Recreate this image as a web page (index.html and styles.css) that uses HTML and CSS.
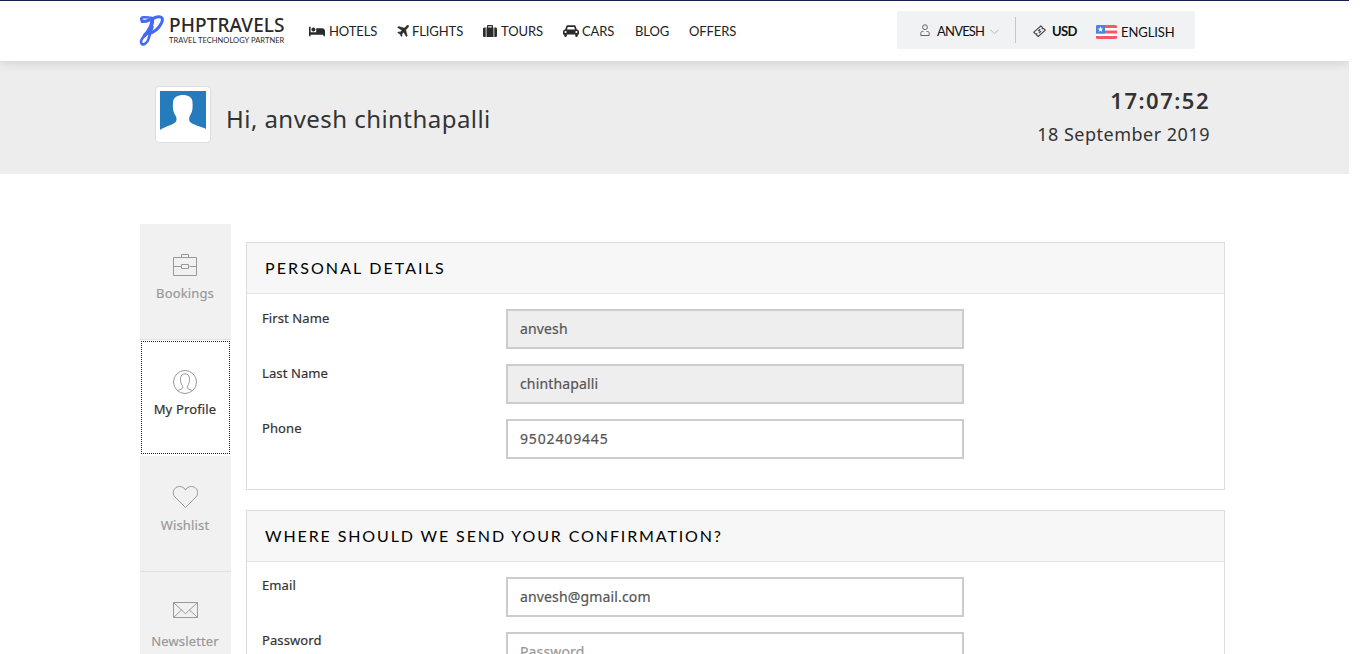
FILE: index.html
```html
<!DOCTYPE html>
<html lang="en">
<head>
<meta charset="utf-8">
<title>My Account</title>
<link rel="stylesheet" href="styles.css">
</head>
<body>
<div class="page">
  <header class="header">
    <a class="logo">
      <svg class="logo-mark" width="26" height="32" viewBox="0 0 26 32" fill="none" stroke="#4569f5" stroke-linecap="round" stroke-linejoin="round">
        <path stroke-width="2.600" d="M8 6C5.500 6.500 2.200 6 2.200 4C2.200 2 6 2 10 2.500C12 2.500 14 2.500 14 4C14 10 11 15 7 19.500C3 23 1 26 2.500 28.500C4 31 8.500 28 9.500 24C11 19 11.500 16 13.500 12"/>
        <path stroke-width="3.800" d="M13.200 5C13 12 9.500 16.500 5.500 20.500"/>
        <path stroke-width="3" d="M3 6.500C9 7 13 3 18 2C23 1 24.500 3.500 22.500 8C20 13 15.500 17.500 9 18.700"/>
      </svg>
      <span class="logo-words"><b class="logo-name">PHPTRAVELS</b><small class="logo-tag">TRAVEL TECHNOLOGY PARTNER</small></span>
    </a>
    <nav class="nav">
      <a class="nav-item hotels"><svg width="16" height="13" viewBox="0 0 640 512"><path fill="#292b2c" d="M176 256c44 0 80-36 80-80s-36-80-80-80-80 36-80 80 36 80 80 80zm352-128H304c-9 0-16 7-16 16v144H64V80c0-9-7-16-16-16H16C7 64 0 71 0 80v352c0 9 7 16 16 16h32c9 0 16-7 16-16v-48h512v48c0 9 7 16 16 16h32c9 0 16-7 16-16V240c0-62-50-112-112-112z"/></svg><span>HOTELS</span></a>
      <a class="nav-item flights"><svg width="12" height="12" viewBox="0 0 12 12"><path fill="#292b2c" stroke="#292b2c" stroke-width=".6" d="M10.700.3c.8 0 1 .4.800 1.200-.2.700-.8 1.300-1.300 1.800L8.700 4.900l1.500 5.900-.9.800-2.500-4.500-2 1.900.3 1.700-.8.700-1.200-2.300L.8 7.700l.7-.8 1.700.3 2-2L.7 2.500l.9-.9 5.700 1.600L8.800 1.700c.6-.6 1.200-1.200 1.900-1.400z"/></svg><span>FLIGHTS</span></a>
      <a class="nav-item tours"><svg width="14" height="13" viewBox="0 0 14 13"><path fill="#292b2c" d="M4 2.500V1.200C4 .5 4.500 0 5.200 0h3.600C9.500 0 10 .5 10 1.200v1.300h.5V12h-7V2.500zM5.200 2.500h3.600V1.200H5.200zM0 4c0-1 .7-1.500 1.500-1.500h1.200V12H1.500C.5 12 0 11.500 0 10.500zM11.300 2.500h1.200c.9 0 1.500.5 1.500 1.500v6.500c0 1-.6 1.500-1.500 1.500h-1.200z" fill-rule="evenodd"/></svg><span>TOURS</span></a>
      <a class="nav-item cars"><svg width="16" height="12" viewBox="0 0 16 12"><path fill="#292b2c" fill-rule="evenodd" d="M2.200 4.500 3.200 1.500C3.500.5 4 .2 5 .2h6c1 0 1.500.3 1.800 1.300l1 3c1.400.2 2.200 1 2.200 2.300v2.700h-1.200v1c0 .9-.5 1.500-1.300 1.500s-1.300-.6-1.300-1.500v-1H3.800v1c0 .9-.5 1.500-1.300 1.500s-1.300-.6-1.300-1.500v-1H0V6.800c0-1.300.8-2.100 2.200-2.300zM4 4.500h8l-.8-2.400H4.800zM2.600 8.100a1.100 1.100 0 1 0 0-2.200 1.100 1.100 0 0 0 0 2.200zm10.800 0a1.100 1.100 0 1 0 0-2.200 1.100 1.100 0 0 0 0 2.200z"/></svg><span>CARS</span></a>
      <a class="nav-item blog">BLOG</a>
      <a class="nav-item offers">OFFERS</a>
    </nav>
    <div class="tools">
      <a class="tool account"><svg width="10" height="13" viewBox="0 0 10 13" fill="none" stroke="#646669"><circle cx="5" cy="3.200" r="2.400"/><path d="M3.500 7.500H2.300C1.200 7.500.8 8.300.8 9.300v2.200h8.400V9.300c0-1-.4-1.800-1.500-1.800H6.500"/></svg><span>ANVESH</span><svg class="caret" width="9" height="6" viewBox="0 0 9 6" fill="none" stroke="#b4b6b8"><path d="M.5.800 4.500 4.800 8.500.8"/></svg></a>
      <a class="tool currency"><svg width="13" height="13" viewBox="0 0 13 13" fill="none" stroke="#44464a" stroke-width="1.100"><path d="M.8 7.200 7.800 1l1.600 1.300-.1 1.300 1.400-.1 1.600 1.600-7 6.400-1.600-1.300.1-1.400-1.400.1z"/><path d="M7.300 4.300 5.600 5.600l2 1-1.800 1.500"/></svg><b>USD</b></a>
      <a class="tool language"><svg width="21" height="14" viewBox="0 0 21 14"><rect width="21" height="14" rx="1.500" fill="#f15b68"/><path fill="#fff" d="M0 3h21v2.600H0zM0 8.400h21V11H0z"/><path fill="#4c86dc" d="M1.500 0H9v8.400H0V1.500Q0 0 1.500 0z"/><path fill="#fff" d="m4.500 1.600.8 1.800 1.900.2-1.400 1.200.4 1.900-1.700-1-1.700 1 .4-1.900-1.400-1.200 1.900-.2z"/></svg><span>ENGLISH</span></a>
    </div>
  </header>

  <section class="welcome">
    <svg class="avatar" width="56" height="57" viewBox="0 0 56 57"><rect x=".5" y=".5" width="55" height="56" rx="3.500" fill="#fff" stroke="#ddd"/><path fill="#267bbc" d="M5 5h46v38c-5-2.500-13-4-16-7-1.300-1.800-1-4.500 0-6.500 2-3 3-6 2.500-13C37.500 11 33 9 28 9s-10 2-10 8c-.4 6 .3 9 2.500 12.500 1.200 2 1.500 4.700.2 6.500-2.700 3-11.200 4.500-15.700 8z"/></svg>
    <h1 class="greeting">Hi, anvesh chinthapalli</h1>
    <div class="clock"><strong class="time">17:07:52</strong><span class="date">18 September 2019</span></div>
  </section>

  <main class="content">
    <aside class="side">
      <a class="side-item"><svg width="26" height="24" viewBox="0 0 26 24" fill="none" stroke="#999"><path d="M1.500 4.500h23v18h-23zM9.500 4.500v-3h7v3M1.500 13.500h8M17.500 13.500h7M9.500 11.500h7v4h-7z"/></svg><span class="side-label">Bookings</span></a>
      <a class="side-item active"><svg width="26" height="24" viewBox="0 0 26 24" fill="none" stroke="#999"><circle cx="13" cy="12" r="11.500"/><path d="M5.500 20.700c1-1 4.600-1 5.100-2.800.5-1.600-.3-2-1.100-3.600-1-2-1.200-4-.9-6.500.4-2.700 2.100-4 4.400-4s4 1.300 4.400 4c.3 2.500.1 4.500-.9 6.500-.8 1.600-1.600 2-1.100 3.600.5 1.800 4.100 1.800 5.100 2.800"/></svg><span class="side-label">My Profile</span></a>
      <a class="side-item"><svg width="26" height="24" viewBox="0 0 26 24" fill="none" stroke="#999"><path d="M13.500 22.500 3 12C-.5 8.500 1.500 1.500 7.500 1.500c2.500 0 4.700 1 6 3.500 1.300-2.500 3.500-3.500 6-3.500 6 0 8 7 4.500 10.500z"/></svg><span class="side-label">Wishlist</span></a>
      <a class="side-item"><svg width="26" height="24" viewBox="0 0 26 24" fill="none" stroke="#999"><path d="M1.500 1.500h24v15h-24zM1.500 1.500l12 11.200 12-11.200M1.500 16.500l8-7.500M25.500 16.500 17.500 9"/></svg><span class="side-label">Newsletter</span></a>
    </aside>
    <form class="forms">
      <section class="panel first">
        <h2 class="panel-title">PERSONAL DETAILS</h2>
        <div class="panel-body">
          <label class="row"><span>First Name</span><input class="field" value="anvesh" readonly></label>
          <label class="row"><span>Last Name</span><input class="field" value="chinthapalli" readonly></label>
          <label class="row"><span>Phone</span><input class="field phone" value="9502409445"></label>
        </div>
      </section>
      <section class="panel second">
        <h2 class="panel-title confirm">WHERE SHOULD WE SEND YOUR CONFIRMATION?</h2>
        <div class="panel-body">
          <label class="row"><span>Email</span><input class="field" value="anvesh@gmail.com"></label>
          <label class="row"><span>Password</span><input class="field" type="password" placeholder="Password"></label>
        </div>
      </section>
    </form>
  </main>
</div>
</body>
</html>
```

FILE: styles.css
```css
* { box-sizing: border-box; }
html { height: 100%; overflow: hidden; }
body { margin: 0; height: 100%; overflow: hidden; background: #fff; color: #333; font-family: Lato, "Noto Sans", sans-serif; }
.page { width: 1349px; height: 654px; overflow: hidden; }
svg { display: block; flex: none; }

.header { position: relative; z-index: 1; display: flex; height: 61px; padding-left: 139px; border-top: 1px solid #19214a; background: #fff; box-shadow: 0 2px 10px rgba(0, 0, 0, .12); }
.logo { display: flex; width: 170px; padding-top: 14px; color: #292929; }
.logo-words { display: flex; flex-direction: column; padding-left: 4px; white-space: nowrap; }
.logo-name { font: 500 19px/20px "Noto Sans", sans-serif; letter-spacing: .1px; }
.logo-tag { margin-top: 1px; font: 400 7.500px/9px Lato, sans-serif; letter-spacing: .06px; }
.nav { display: flex; gap: 20px; width: 588px; height: 60px; align-items: center; color: #222; font-size: 13px; line-height: 20px; letter-spacing: -.1px; white-space: nowrap; }
.nav-item { display: flex; align-items: center; }
.hotels { width: 68px; gap: 4px; }
.flights { width: 66px; gap: 3px; }
.tours { width: 60px; gap: 4px; }
.cars { width: 52px; gap: 3px; }
.blog { width: 34px; }
.offers { width: 46px; }
.tools { display: flex; width: 298px; height: 38px; margin-top: 10px; align-items: center; background: #f1f2f4; border-radius: 2px; color: #111; font-size: 13px; line-height: 18px; }
.tool { display: flex; align-items: center; }
.tool span, .tool b { padding-top: 2px; }
.account { width: 119px; height: 26px; padding-left: 23px; gap: 7px; border-right: 1px solid #c5c7ca; letter-spacing: -.8px; }
.caret { margin: 3px 0 0 -1px; }
.currency { width: 80px; padding-left: 17px; gap: 6px; letter-spacing: -.6px; }
.currency svg { margin-top: 2px; }
.language { gap: 4px; padding-top: 2px; letter-spacing: -.1px; }
.language svg { margin-top: 2px; }

.welcome { display: flex; height: 113px; padding: 25px 140px 0 155px; background: #ededed; }
.greeting { flex: 1; margin: 14px 0 0 15px; font: 400 24px/38px "Noto Sans", sans-serif; letter-spacing: .45px; }
.clock { display: flex; flex-direction: column; align-items: flex-end; font-family: "Noto Sans", sans-serif; }
.time { font-size: 22px; line-height: 28px; font-weight: 600; letter-spacing: 1.5px; margin-right: -1px; }
.date { margin: 7px -1px 0 0; font-size: 18px; line-height: 26px; letter-spacing: .5px; }

.content { display: flex; gap: 15px; padding: 50px 124px 0 140px; }
.side { width: 91px; }
.side-item { display: flex; flex-direction: column; align-items: center; gap: 7px; height: 116px; padding: 29px 1px 0 0; border-bottom: 1px solid #e1e1e1; background: #f1f1f1; color: #999; font: 400 13px/18px "Noto Sans", sans-serif; letter-spacing: .15px; }
.side-label { -webkit-text-stroke: .2px; }
.side-item.active { padding-top: 30px; gap: 6px; background: #fff; color: #333; outline: 1px dotted #222; outline-offset: -2px; height: 115px; margin-bottom: 1px; border-color: #fff; }
.forms { flex: 1; padding-top: 18px; }
.panel { border: 1px solid #ddd; }
.first { height: 248px; margin-bottom: 20px; }
.second { height: 248px; }
.panel-title { height: 51px; margin: 0; padding-left: 18px; border-bottom: 1px solid #e3e3e3; background: #f7f7f7; color: #000; font: 400 16px/50px Lato, sans-serif; letter-spacing: 2.1px; }
.panel-title.confirm { letter-spacing: 1.88px; }
.panel-body { display: flex; flex-direction: column; gap: 15px; padding: 15px 15px 0; font: 400 13px/19px "Noto Sans", sans-serif; letter-spacing: .1px; }
.row > span { -webkit-text-stroke: .2px; }
.second .row > span { margin-top: -1px; }
.row { display: grid; grid-template-columns: 244px 458px; height: 40px; }
.field { width: 458px; height: 40px; padding: 0 12px 2px; border: 2px solid #ccc; border-radius: 0; outline: 0; background: #fff; color: #555; font: 400 14px/20px "Noto Sans", sans-serif; letter-spacing: .15px; -webkit-text-stroke: .2px; }
.phone { letter-spacing: .85px; }
.field:read-only { background: #eee; }
.field::placeholder { color: #999; opacity: 1; }
```
